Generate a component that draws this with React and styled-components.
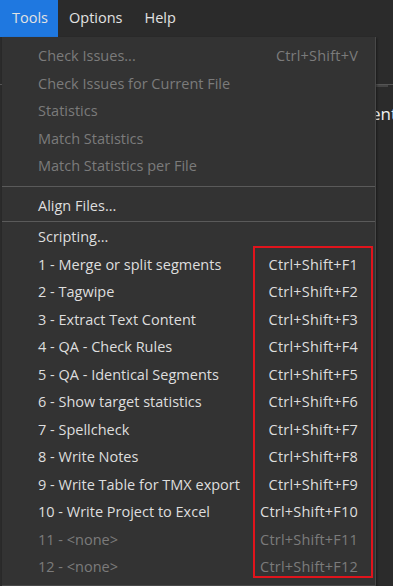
import styled, { createGlobalStyle } from "styled-components";

const GlobalStyle = createGlobalStyle`
  html, body {
    margin: 0;
    padding: 0;
    background: #2b2b2b;
  }
  body {
    font-family: "Open Sans", "Noto Sans", sans-serif;
    width: 393px;
    height: 586px;
    overflow: hidden;
  }
`;

const menuSections = [
  {
    pad: [0, 6],
    items: [
      { label: "Check Issues...", shortcut: "Ctrl+Shift+V", disabled: true },
      { label: "Check Issues for Current File", disabled: true },
      { label: "Statistics", disabled: true },
      { label: "Match Statistics", disabled: true },
      { label: "Match Statistics per File", disabled: true },
    ],
  },
  { pad: [5, 2], items: [{ label: "Align Files..." }] },
  {
    pad: [1, 0],
    items: [
      { label: "Scripting..." },
      { label: "1 - Merge or split segments", shortcut: "Ctrl+Shift+F1" },
      { label: "2 - Tagwipe", shortcut: "Ctrl+Shift+F2" },
      { label: "3 - Extract Text Content", shortcut: "Ctrl+Shift+F3" },
      { label: "4 - QA - Check Rules", shortcut: "Ctrl+Shift+F4" },
      { label: "5 - QA - Identical Segments", shortcut: "Ctrl+Shift+F5" },
      { label: "6 - Show target statistics", shortcut: "Ctrl+Shift+F6" },
      { label: "7 - Spellcheck", shortcut: "Ctrl+Shift+F7" },
      { label: "8 - Write Notes", shortcut: "Ctrl+Shift+F8" },
      { label: "9 - Write Table for TMX export", shortcut: "Ctrl+Shift+F9" },
      { label: "10 - Write Project to Excel", shortcut: "Ctrl+Shift+F10" },
      { label: "11 - <none>", shortcut: "Ctrl+Shift+F11", disabled: true },
      { label: "12 - <none>", shortcut: "Ctrl+Shift+F12", disabled: true },
    ],
  },
];

const App = () => {
  return (
    <>
      <GlobalStyle />
      <Window>
        <MenuBar>
          <MenuTitle $active>Tools</MenuTitle>
          <MenuTitle>Options</MenuTitle>
          <MenuTitle>Help</MenuTitle>
        </MenuBar>
        <Workspace>
          <Toolbar />
          <EditorLine>
            <span>i</span>
            <span>content</span>
          </EditorLine>
          <EditorLine>
            <span>i</span>
          </EditorLine>
        </Workspace>

        <Dropdown>
          {menuSections.map((section, i) => (
            <Section
              key={i}
              $first={i === 0}
              $pt={section.pad[0]}
              $pb={section.pad[1]}
            >
              {section.items.map((item) => (
                <Item key={item.label} $disabled={item.disabled}>
                  <Label>{item.label}</Label>
                  {item.shortcut && <Shortcut>{item.shortcut}</Shortcut>}
                </Item>
              ))}
            </Section>
          ))}
          <Highlight />
        </Dropdown>
      </Window>
    </>
  );
};

export default App;

const Window = styled.div`
  position: relative;
  width: 393px;
  height: 586px;
  background: #2b2b2b;
  overflow: hidden;
`;

const MenuBar = styled.div`
  display: flex;
  height: 37px;
  background: #2b2b2b;
`;

const MenuTitle = styled.div`
  display: flex;
  align-items: center;
  padding: 0 11px 2px 11px;
  font-size: 14.5px;
  color: #e2e2e2;
  background: ${(p) => (p.$active ? "#1f78e0" : "transparent")};
  &:first-child {
    padding-left: 12px;
    padding-right: 10px;
  }
`;

const Workspace = styled.div`
  display: flex;
  flex-direction: column;
`;

const Toolbar = styled.div`
  height: 47px;
  border-bottom: 1px solid #555555;
  box-shadow: 0 7px 0 -5px #454545;
`;

const EditorLine = styled.div`
  display: flex;
  justify-content: space-between;
  margin: 17px -4px 0 -4px;
  font-size: 17px;
  line-height: 24px;
  color: #f2f2f2;
  white-space: nowrap;
  & + & {
    margin-top: 0;
  }
`;

// Dropdown menu overlaying the workspace
const Dropdown = styled.div`
  position: absolute;
  top: 37px;
  left: 2px;
  width: 373px;
  padding: 5px 0 4px;
  background: #333333;
  border-right: 1px solid #484848;
  border-bottom: 1px solid #484848;
  box-shadow: 1px 1px 2px rgba(0, 0, 0, 0.4);
`;

const Section = styled.div`
  display: flex;
  flex-direction: column;
  border-top: ${(p) => (p.$first ? "none" : "1px solid #5a5a5a")};
  padding: ${(p) => `${p.$pt}px 0 ${p.$pb}px`};
`;

const Item = styled.div`
  display: flex;
  align-items: center;
  justify-content: space-between;
  height: 27.5px;
  padding: 0 17px 0 36px;
  font-size: 14.5px;
  color: ${(p) => (p.$disabled ? "#7b7b7b" : "#dedede")};
`;

const Label = styled.span`
  white-space: nowrap;
`;

const Shortcut = styled.span`
  white-space: nowrap;
  letter-spacing: 0.2px;
`;

const Highlight = styled.div`
  position: absolute;
  left: 251px;
  top: 209px;
  width: 116px;
  height: 328px;
  border: 2px solid #e0141c;
  pointer-events: none;
`;
